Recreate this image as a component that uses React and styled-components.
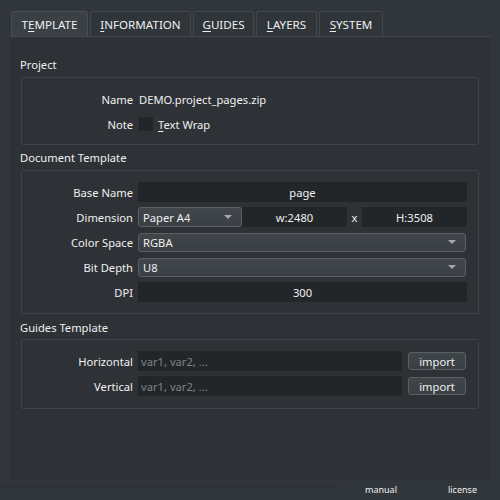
import React from "react";
import styled, { createGlobalStyle } from "styled-components";

const Global = createGlobalStyle`
  html, body { margin: 0; padding: 0; background: #31363b; }
  body { font-family: "Noto Sans", "Open Sans", sans-serif; font-size: 11.2px; color: #eff0f1; }
  * { box-sizing: border-box; }
`;

const Window = styled.div`
  width: 500px;
  height: 500px;
  display: flex;
  flex-direction: column;
  background: #31363b;
  padding-top: 11px;
`;

const TabBar = styled.div`
  display: flex;
  gap: 2px;
  padding-left: 11px;
  height: 25px;
`;

const Tab = styled.div`
  width: ${(p) => p.$w}px;
  height: 25px;
  display: flex;
  align-items: center;
  justify-content: center;
  font-size: 11.6px;
  color: #eff0f1;
  border: 1px solid ${(p) => (p.$active ? "#4a4f54" : "#43484d")};
  border-bottom: none;
  border-radius: 3px 3px 0 0;
  background: ${(p) => (p.$active ? "#3b4045" : "#30353a")};
  padding-top: 1px;
`;

const U = styled.span`
  text-decoration: underline;
  text-underline-offset: 2px;
  text-decoration-thickness: 1px;
`;

const Pane = styled.div`
  margin: 0 10px;
  height: 444px;
  background: #2e3236;
  border-top: 1px solid #44494e;
  padding: 19px 11px 0 10px;
  display: flex;
  flex-direction: column;
`;

const SectionTitle = styled.div`
  height: 18px;
  line-height: 18px;
  margin-bottom: ${(p) => p.$mb ?? 3}px;
`;

const Group = styled.div`
  margin-left: 1px;
  border: 1px solid #3e4348;
  border-radius: 2px;
  padding: 11px 11px ${(p) => p.$pb ?? 11}px 0;
  display: flex;
  flex-direction: column;
  gap: ${(p) => p.$gap ?? 5}px;
  margin-bottom: ${(p) => p.$mb ?? 4}px;
`;

const Row = styled.div`
  display: grid;
  grid-template-columns: 111px 1fr;
  column-gap: 5px;
  align-items: center;
  height: ${(p) => p.$h ?? 20}px;
`;

const Label = styled.div`
  text-align: right;
  white-space: nowrap;
`;

const Value = styled.div`
  padding-left: 1px;
  display: flex;
  align-items: center;
`;

const Field = styled.div`
  height: ${(p) => p.$h ?? 20}px;
  background: #232629;
  display: flex;
  align-items: center;
  justify-content: ${(p) => (p.$left ? "flex-start" : "center")};
  padding-left: ${(p) => (p.$left ? 3 : 0)}px;
  color: ${(p) => (p.$ph ? "#7e8286" : "#eff0f1")};
  flex: ${(p) => (p.$w ? `0 0 ${p.$w}px` : "1 1 auto")};
  width: ${(p) => (p.$w ? `${p.$w}px` : "auto")};
`;

const Combo = styled.div`
  height: ${(p) => p.$h ?? 19}px;
  flex: ${(p) => (p.$w ? `0 0 ${p.$w}px` : "1 1 auto")};
  margin-right: ${(p) => p.$mr ?? 0}px;
  border: 1px solid #5a5f64;
  border-radius: 3px;
  background: linear-gradient(#41464b, #3a3f44);
  display: flex;
  align-items: center;
  justify-content: space-between;
  padding: 0 9px 0 4px;
`;

const Arrow = styled.span`
  width: 0;
  height: 0;
  border-left: 4px solid transparent;
  border-right: 4px solid transparent;
  border-top: 4px solid #a3a7ab;
`;

const Inline = styled.div`
  display: flex;
  align-items: center;
  width: 100%;
`;

const Times = styled.div`
  width: 15px;
  text-align: center;
  flex: 0 0 15px;
`;

const Check = styled.span`
  width: 14px;
  height: 14px;
  background: #232629;
  margin: 0 5px 0 0;
  display: inline-block;
`;

const Button = styled.div`
  flex: 0 0 58px;
  height: 18px;
  margin-left: 6px;
  margin-right: 1px;
  border: 1px solid #5a5f64;
  border-radius: 3px;
  background: linear-gradient(#40454a, #3a3f44);
  display: flex;
  align-items: center;
  justify-content: center;
`;

const Footer = styled.div`
  height: 20px;
  display: flex;
  align-items: flex-start;
`;

const StatusLine = styled.div`
  width: 338px;
  margin-top: 6px;
  border-top: 1px solid #2a2e32;
`;

const Link = styled.div`
  font-size: 9px;
  margin-top: 3px;
  margin-left: ${(p) => p.$ml}px;
  color: #eff0f1;
`;

export default function App() {
  return (
    <Window>
      <Global />
      <TabBar>
        <Tab $w={77} $active>T<U>E</U>MPLATE</Tab>
        <Tab $w={101}><U>I</U>NFORMATION</Tab>
        <Tab $w={61}><U>G</U>UIDES</Tab>
        <Tab $w={61}><U>L</U>AYERS</Tab>
        <Tab $w={64}><U>S</U>YSTEM</Tab>
      </TabBar>
      <Pane>
        <SectionTitle>Project</SectionTitle>
        <Group $pb={10} $mb={4}>
          <Row>
            <Label>Name</Label>
            <Value>DEMO.project_pages.zip</Value>
          </Row>
          <Row>
            <Label>Note</Label>
            <Value>
              <Check />
              <span><U>T</U>ext Wrap</span>
            </Value>
          </Row>
        </Group>
        <SectionTitle>Document Template</SectionTitle>
        <Group $pb={11} $mb={5} $gap={5}>
          <Row>
            <Label>Base Name</Label>
            <Field>page</Field>
          </Row>
          <Row>
            <Label>Dimension</Label>
            <Inline>
              <Combo $w={104} $h={20}>Paper A4<Arrow /></Combo>
              <Field $w={105}>w:2480</Field>
              <Times>x</Times>
              <Field>H:3508</Field>
            </Inline>
          </Row>
          <Row>
            <Label>Color Space</Label>
            <Inline><Combo $mr={1}>RGBA<Arrow /></Combo></Inline>
          </Row>
          <Row>
            <Label>Bit Depth</Label>
            <Inline><Combo $mr={1}>U8<Arrow /></Combo></Inline>
          </Row>
          <Row>
            <Label>DPI</Label>
            <Field>300</Field>
          </Row>
        </Group>
        <SectionTitle $mb={2}>Guides Template</SectionTitle>
        <Group $pb={12} $gap={5}>
          <Row>
            <Label>Horizontal</Label>
            <Inline>
              <Field $left $ph>var1, var2, ...</Field>
              <Button>import</Button>
            </Inline>
          </Row>
          <Row>
            <Label>Vertical</Label>
            <Inline>
              <Field $left $ph>var1, var2, ...</Field>
              <Button>import</Button>
            </Inline>
          </Row>
        </Group>
      </Pane>
      <Footer>
        <StatusLine />
        <Link $ml={27}>manual</Link>
        <Link $ml={51}>license</Link>
      </Footer>
    </Window>
  );
}
